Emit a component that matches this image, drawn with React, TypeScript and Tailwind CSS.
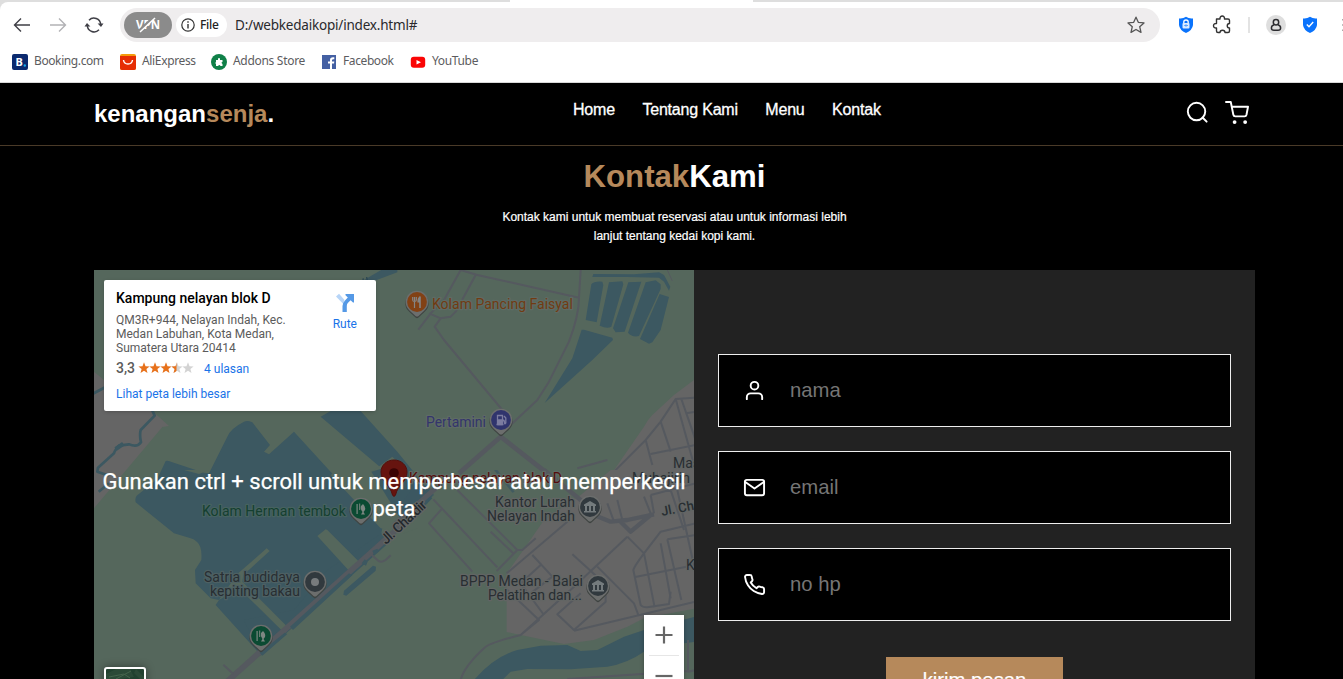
import React from "react";

const GREEN = "#55675c";
const GRAY = "#656565";
const WATER = "#3c5861";
const ROAD = "#55595f";

type PinProps = { x: number; y: number; color: string; kind: "food" | "fuel" | "fish" | "dot" | "civic" };

function Pin({ x, y, color, kind }: PinProps) {
  return (
    <g transform={`translate(${x} ${y})`}>
      <path d="M-11.6 1C-11.6-6-6.5-11.2 0-11.2S11.6-6 11.6 1C11.6 5.5 9 8 5 11.5L1.5 14.7Q0 16 -1.5 14.7L-5 11.5C-9 8-11.6 5.5-11.6 1Z" fill="#3f4442" transform="translate(0 .8)" />
      <path d="M-11.3 0C-11.3-6.5-6.3-11.3 0-11.3S11.3-6.5 11.3 0C11.3 4.5 9 7.3 5 10.8L1.5 14Q0 15.2 -1.5 14L-5 10.8C-9 7.3-11.3 4.5-11.3 0Z" fill="#6c6e6d" />
      <circle r="9.9" fill={color} />
      {kind === "food" && (
        <g stroke="#858585" strokeWidth="1.2" fill="none">
          <path d="M-4.3-5v3q0 1.5 1.8 1.5T-.7-2v-3M-2.5-5v11" />
          <path d="M3-5.5V6" strokeWidth="1.6" />
          <path d="M3-5Q1-4 1 0h2" fill="#858585" />
        </g>
      )}
      {kind === "fuel" && (
        <g fill="none" stroke="#7c7ca0" strokeWidth="1.3">
          <path d="M-3.5 4.5V-4.5H1.5V4.5M-4.5 4.5h7M1.5 0q2 0 2 2.5t1.3.5V-2L3-4" />
          <path d="M-3 0h4v4.5h-4Z" fill="#7c7ca0" />
        </g>
      )}
      {kind === "fish" && (
        <g fill="#7d8782">
          <path d="M-4.5-5h1.2V5h-1.2ZM-1.8-5.5h1V1h-1Z" />
          <path d="M2-5Q5-2 4 1L2.5 3 4 5.5H0L1.5 3Q-1 0 0-3Z" />
        </g>
      )}
      {kind === "dot" && <circle r="4" fill="#777b7d" />}
      {kind === "civic" && (
        <g fill="#747b7d">
          <path d="M-6-2.5 0-6 6-2.5V-1H-6ZM-6 4H6V5.500H-6ZM-5-1h2v5h-2ZM-1-1h2v5h-2ZM3-1h2v5H3Z" />
        </g>
      )}
    </g>
  );
}

const halo = { paintOrder: "stroke" } as React.CSSProperties;

function MapDrawing() {
  return (
    <svg className="absolute inset-0 block h-[409px] w-[600px]" viewBox="94 270 600 409" fontFamily="Roboto, sans-serif">
      <rect x="94" y="270" width="600" height="409" fill={GREEN} />

      {/* north-west quarter */}
      <g transform="translate(94 265) scale(.333333)">
        <path d="M0 320 30 345 175 438 225 483 205 486 0 730Z" fill={GRAY} />
        <g fill="none" stroke={WATER} strokeWidth="8" strokeLinejoin="round">
          <path d="M-5 387 35 366M172 430 182 452 140 495Q136 510 141 532 130 548 105 538L75 542Q62 556 60 565L12 608 10 620 45 632M14 680 45 655" />
          <path d="M65 552 88 536" strokeWidth="13" />
        </g>
        <path d="M810 45 870 10H910V22L840 48Z" fill={WATER} />
        <path d="M806 50 808 40M820 48 818 36" stroke="#2c4854" strokeWidth="4" />
        <path d="M215 588Q222 585 235 592L330 623 345 625 400 515Q410 490 450 470 460 465 475 472L528 540 510 560 525 568 600 500 865 790 860 815 500 1170 365 1020 375 1005 350 1000 305 955 303 915 322 885Q325 845 310 832 300 822 290 820L240 805 125 712Q122 700 128 692L190 642Z" fill={WATER} />
        <path d="M680 455 710 438H800L910 560 1015 690 1000 715 925 770 835 650 875 620Z" fill={WATER} />
        <path d="M831 622 895 575 912 592 845 650Z" fill={GREEN} />
        <path d="M725 618H830L970 790 930 805 860 790 710 630Z" fill={GREEN} />
        <path d="M832 620 900 600 1015 700 980 735 925 770Z" fill={WATER} />
      </g>

      {/* south-west quarter */}
      <g transform="translate(94 470) scale(.333333)">
        <path d="M500 557 900 205 870 185 700 300 600 420 450 450Z" fill={WATER} />
        <path d="M670 198 695 178 700 180 795 275 765 302ZM430 312 518 235 527 243 448 315 445 335 580 470 572 490 430 350 400 375 375 390Z" fill={GREEN} />
        <path d="M270 0h75l-30 12Z" fill={GREEN} />
        <path d="M400 634 960 132" stroke={ROAD} strokeWidth="17" />
        <path d="M750 362 837 287 846 290 845 302 757 377 748 374ZM588 470 765 310 775 316 597 480ZM497 548 572 488 580 492 505 557ZM835 242 850 236 855 244 840 255ZM803 280 812 268 821 275 816 287Z" fill={WATER} />
        <path d="M388 584 418 612M828 250 850 270Q860 280 875 270L890 256" fill="none" stroke={ROAD} strokeWidth="6" />
      </g>

      {/* north-east quarter */}
      <g transform="translate(394 265) scale(.333333)">
        <path d="M900 345 840 390 775 450Q760 465 750 485L650 630 640 645H900Z" fill={GRAY} />
        <g fill={WATER}>
          <path d="M598 27 595 36H700L795 38 810 50 825 77 829 65 810 30 795 22 720 28Z" />
          <path d="M592 58Q600 48 625 50L628 60 608 172 575 165ZM645 52 685 49 688 58 652 185Q640 192 617 182ZM703 52 742 50 692 200 665 202 657 190ZM755 52 785 46 800 58V72L735 213Q715 218 702 203ZM797 87 825 96 800 195 775 232 765 236 738 222Z" />
          <path d="M563 194 570 194 655 218 657 225 595 285 452 414 535 280Z" />
        </g>
        <g fill="none" stroke={ROAD} strokeWidth="6" strokeLinejoin="round">
          <path d="M200 15 150 105 110 145 73 194M105 145 140 160 170 155 185 140 245 30M200 15 250 30 555 98M560 15 555 98Q555 150 525 230L465 350 430 405 350 480M140 160 122 185 150 225 325 435" />
          <path d="M820 15 835 48" strokeWidth="3" />
          <path d="M905 398 845 402 800 470 755 525 640 640M845 402 900 600M862 402 910 540M875 445 905 440M800 470 830 560M755 525 775 600M770 567 905 540" />
        </g>
        <path d="M195 625 320 515 460 625" fill="none" stroke={ROAD} strokeWidth="14" />
      </g>

      {/* south-east quarter */}
      <g transform="translate(394 470) scale(.333333)">
        <path d="M650 0 560 75 450 150 395 230 338 310V486L380 495 510 522 600 510 700 470 750 445 905 415V0Z" fill={GRAY} />
        <path d="M240 630Q300 560 370 540L440 527 520 525 560 543 610 540 690 500 750 480 905 440V515L870 520 750 545Q700 580 640 590L530 598 400 597 350 605 325 630Z" fill={WATER} />
        <path d="M300 0 310 0 362 65 355 68ZM60 50 100 45 120 75 85 108 0 130Z" fill={WATER} opacity=".8" />
        <g fill="none" stroke={ROAD} strokeWidth="6" strokeLinejoin="round">
          <path d="M118 88 310 292M145 115 105 160 235 305M190 60 370 240 308 303M290 185 360 252M370 240 385 240 425 205M338 310 520 155M415 255 475 320M440 285 380 340 450 435M475 320 410 370M340 360 435 450 380 495Q280 520 270 535 210 590 200 630M380 495 540 350 700 200M535 253 620 330M610 290 720 400 733 435M635 350V395L540 480 490 433 560 370M540 482 905 395M700 200 750 250 800 185 905 160M750 250Q720 290 718 300L740 405Q745 412 760 412L825 402 830 365M720 322 905 285M750 250 782 412M800 220 830 385M820 208 905 195M820 208 862 390M640 100 660 155M670 90 685 150M750 80 770 130M635 645 640 640M770 75 905 40M770 75 780 130M850 60 905 310M882 510V605L905 600M520 627 880 603M550 -5 640 -30M830 60 870 180" />
          <path d="M450 0 560 90 600 135 650 155 700 150 780 133M680 155 710 185 770 135" strokeWidth="13" />
        </g>
        <path d="M0 165 155 28" stroke={ROAD} strokeWidth="15" />
      </g>

      <g fontSize="14" strokeWidth="2.5" strokeLinejoin="round" letterSpacing=".1">
        <g stroke="#5e6b64">
          <text x="432" y="309" fill="#713b12" textLength="141" style={halo}>Kolam Pancing Faisyal</text>
          <text x="426" y="427" fill="#33356c" textLength="60" style={halo}>Pertamini</text>
          <text x="202" y="516" fill="#143f30" stroke="#46625f" textLength="144" style={halo}>Kolam Herman tembok</text>
          <text x="409" y="483" fill="#560b0b" textLength="153" style={halo}>Kampung nelayan blok D</text>
        </g>
        <g fill="#282e32" stroke="#626564">
          <text x="204" y="582" textLength="96" stroke="#4d6063" style={halo}>Satria budidaya</text>
          <text x="210" y="596" textLength="90" stroke="#4d6063" style={halo}>kepiting bakau</text>
          <text x="495" y="507" textLength="80" style={halo}>Kantor Lurah</text>
          <text x="487" y="521" textLength="88" style={halo}>Nelayan Indah</text>
          <text x="460" y="586" textLength="123" style={halo}>BPPP Medan - Balai</text>
          <text x="488" y="600" textLength="94" style={halo}>Pelatihan dan...</text>
          <text x="673" y="468" style={halo}>Mas</text>
          <text x="632" y="483" textLength="58" style={halo}>Muhajirin</text>
          <text x="686" y="570" style={halo}>K</text>
          <text transform="translate(662 516) rotate(-11)" fontSize="13" fontWeight="500" letterSpacing="0" style={halo}>Jl. Cha</text>
          <text transform="translate(386 545) rotate(-43)" fontWeight="500" textLength="57" fill="#23282c" style={halo}>Jl. Chaidir</text>
        </g>
      </g>

      <Pin x={417} y={302} color="#824115" kind="food" />
      <Pin x={501} y={420} color="#30346d" kind="fuel" />
      <Pin x={361} y={509} color="#0b4a32" kind="fish" />
      <Pin x={261} y={636} color="#0b4a32" kind="fish" />
      <Pin x={315} y={582} color="#31393e" kind="dot" />
      <Pin x={590} y={507} color="#31393e" kind="civic" />
      <Pin x={598} y={586} color="#31393e" kind="civic" />

      <path d="M381 472C381 465 387 460 394 460S407 465 407 472C407 482 398 484 395.5 495Q394 498 392.500 495C390 484 381 482 381 472Z" fill="#66140f" stroke="#540f0c" />
      <circle cx="394" cy="473" r="4.800" fill="#3a0404" />
    </svg>
  );
}

function Stars() {
  const star = "M6 .3 7.500 4.200 11.600 4.400 8.400 7 9.500 11 6 8.700 2.500 11 3.600 7 .4 4.400 4.500 4.200Z";
  return (
    <svg className="mb-[2px] h-[12px] w-[56px]" viewBox="0 0 56 12">
      <defs>
        <clipPath id="half"><rect x="0" y="0" width="5.500" height="12" /></clipPath>
      </defs>
      {[0, 1, 2, 3, 4].map((i) => (
        <path key={i} d={star} transform={`translate(${i * 11} 0)`} fill={i < 3 ? "#e7711b" : "#d3d3d3"} />
      ))}
      <g transform="translate(33 0)"><path d={star} fill="#e7711b" clipPath="url(#half)" /></g>
    </svg>
  );
}

function MapPanel() {
  return (
    <div className="relative h-[409px] w-[600px] shrink-0 overflow-hidden font-[Roboto,sans-serif]">
      <MapDrawing />
      <div className="absolute top-[198px] left-0 w-full text-center text-[22px] leading-[27px] text-white [-webkit-text-stroke:.25px_white]">
        <div className="whitespace-nowrap">Gunakan ctrl + scroll untuk memperbesar atau memperkecil</div>
        <div>peta</div>
      </div>
      <div className="absolute top-[10px] left-[10px] flex h-[131px] w-[272px] justify-between rounded-[2px] bg-white pt-[9px] pr-[19px] pl-[12px] shadow-[0_1px_4px_-1px_rgba(0,0,0,.3)]">
        <div className="whitespace-nowrap">
          <div className="text-[14px] leading-[18px] font-medium text-black">Kampung nelayan blok D</div>
          <div className="mt-[6px] text-[12px] leading-[14px] text-[#5b5b5b]">
            <div>QM3R+944, Nelayan Indah, Kec.</div>
            <div>Medan Labuhan, Kota Medan,</div>
            <div>Sumatera Utara 20414</div>
          </div>
          <div className="mt-[6px] flex h-[15px] items-center">
            <span className="mr-[3px] text-[14px] font-medium text-[#5b5b5b]">3,3</span>
            <Stars />
            <span className="ml-[10px] text-[12px] text-[#1a73e8]">4 ulasan</span>
          </div>
          <div className="mt-[11px] text-[12px] leading-[15px] text-[#1a73e8]">Lihat peta lebih besar</div>
        </div>
        <div className="flex flex-col items-center pt-[4px] text-[12px] text-[#1a73e8]">
          <svg className="h-[20px] w-[20px]" viewBox="0 0 20 20">
            <path d="M1 3.500 4 .8 9.500 7 8.300 11Z" fill="#b7d5f8" />
            <path d="M7.500 19V13Q7.500 10 10 7.500L12.800 4.500 10.500 2.200V1H19V9.500H18L15.600 7.200 12.800 10Q11.800 11 11.800 13V19Z" fill="#5599e6" />
          </svg>
          <span className="mt-[3px] leading-[16px]">Rute</span>
        </div>
      </div>
      <div className="absolute top-[345px] left-[550px] flex h-[80px] w-[40px] flex-col items-center bg-white shadow-[0_1px_4px_rgba(0,0,0,.3)]">
        <svg className="h-[40px] w-[40px]" viewBox="0 0 40 40"><path d="M11.500 20H28.500M20 11.500V28.500" stroke="#666" strokeWidth="2.200" /></svg>
        <div className="h-px w-[30px] bg-[#e6e6e6]" />
        <svg className="h-[39px] w-[40px]" viewBox="0 0 40 39"><path d="M11.500 20H28.500" stroke="#666" strokeWidth="2.200" /></svg>
      </div>
      <div className="absolute top-[397px] left-[10px] h-[42px] w-[42px] rounded-[3px] border-2 border-white bg-[#21412f] shadow-[0_0_8px_rgba(0,0,0,.4)]">
        <svg className="h-full w-full" viewBox="0 0 38 38">
          <path d="M0 5 10 0H24L28 8 14 10 0 12ZM30 0 38 8V14L28 4Z" fill="#2b4a37" />
          <path d="M3 8 18 5 24 9M10 10 25 2" stroke="#45644c" fill="none" />
        </svg>
      </div>
    </div>
  );
}

function Bookmark({ icon, label, width, text }: { icon: React.ReactNode; label: string; width: string; text: string }) {
  return (
    <div className={"flex h-[28px] items-center gap-[6px] " + width}>
      <span className="flex h-4 w-4 shrink-0 items-center justify-center">{icon}</span>
      <span className={"mb-[2px] text-[12px] whitespace-nowrap " + text}>{label}</span>
    </div>
  );
}

function BrowserChrome() {
  return (
    <div className="h-[83px] shrink-0 border-b border-[#d8d8d8] bg-[#dedede] font-['Noto_Sans',sans-serif]">
      <div className="flex h-[2px]">
        <div className="ml-[10px] h-[2px] w-[500px] rounded-t-sm bg-[#dedede]" />
        <div className="h-[2px] w-[243px] bg-white" />
      </div>
      <div className="h-[80px] rounded-tl-[8px] bg-white pt-[6px]">
        <div className="flex h-[34px] items-center">
          <svg className="ml-[12px] h-[20px] w-[20px] shrink-0" viewBox="0 0 20 20" fill="none" stroke="#3f3f46" strokeWidth="1.400"><path d="M18 10H2.500M9 3.500 2.500 10 9 16.500" /></svg>
          <svg className="ml-[16px] h-[20px] w-[20px] shrink-0" viewBox="0 0 20 20" fill="none" stroke="#b2b2b5" strokeWidth="1.400"><path d="M2 10H17.500M11 3.500 17.500 10 11 16.500" /></svg>
          <svg className="ml-[16px] h-[20px] w-[20px] shrink-0" viewBox="0 0 20 20" fill="none" stroke="#3f3f46" strokeWidth="1.500">
            <path d="M5 5.200A6.800 6.800 0 0 1 16.700 9.500M15 14.800A6.800 6.800 0 0 1 3.300 10.500" />
            <path d="M13.600 8.500H19.500L17 12ZM.5 11.500H6.400L3 8Z" fill="#3f3f46" stroke="none" />
          </svg>
          <div className="ml-[16px] flex h-[34px] w-[1040px] shrink-0 items-center rounded-full bg-[#efedee] pl-[4px]">
            <div className="relative flex h-[26px] w-[48px] items-center justify-center rounded-full bg-[#8b8b8b] text-[11.500px] font-bold text-white">
              VPN
              <svg className="absolute inset-0 h-[26px] w-[48px]" viewBox="0 0 48 26"><path d="M15 19 30 5" stroke="#8b8b8b" strokeWidth="3" /><path d="M16 20 31 6" stroke="#fff" strokeWidth="1.500" /></svg>
            </div>
            <div className="ml-[4px] flex h-[24px] w-[51px] items-center rounded-full bg-white pl-[5px]">
              <svg className="h-[14px] w-[14px]" viewBox="0 0 14 14"><circle cx="7" cy="7" r="6.200" fill="none" stroke="#333" strokeWidth="1.200" /><path d="M7 6v4.500M7 3.300v1.400" stroke="#333" strokeWidth="1.400" /></svg>
              <span className="ml-[5px] text-[12px] font-medium tracking-[-.3px] text-[#222]">File</span>
            </div>
            <span className="ml-[8px] text-[13.500px] tracking-[-.2px] whitespace-nowrap text-[#29292c]">D:/webkedaikopi/index.html#</span>
            <svg className="mr-[14px] ml-auto h-[20px] w-[20px]" viewBox="0 0 20 20" fill="none" stroke="#555" strokeWidth="1.300" strokeLinejoin="round"><path d="M10 2.200 12.300 7.300 18 7.900 13.700 11.700 15 17.400 10 14.500 5 17.400 6.300 11.700 2 7.900 7.700 7.300Z" /></svg>
          </div>
          <svg className="ml-[18px] h-[18px] w-[16px] shrink-0" viewBox="0 0 16 18">
            <path d="M1 2.500Q5 3 8 .8 11 3 15 2.500V9Q14.500 14 8 17 1.500 14 1 9Z" fill="#0a73fc" />
            <path d="M5.800 8V6Q5.800 4 8 4T10.200 6V8" stroke="#fff" strokeWidth="1.300" fill="none" /><rect x="4.500" y="7" width="7" height="5.500" rx="1" fill="#dcecff" /><path d="M8 8.500v2M6.500 9.500h.8M8.800 9.500h.8" stroke="#0a73fc" />
          </svg>
          <svg className="ml-[18px] h-[20px] w-[20px] shrink-0" viewBox="0 0 20 20" fill="none" stroke="#333" strokeWidth="1.400" strokeLinejoin="round"><path d="M4.500 4H8C7.500 0 13 0 12.500 4H16Q17.500 4 17.500 5.500V8.500C14.500 8.500 14.500 13 17.500 13V16Q17.500 17.500 16 17.500H13C13 14.500 8 14.500 8 17.500H6Q4.500 17.500 4.500 16V13C.5 13.500.5 8 4.500 8.500Z" /></svg>
          <div className="ml-[16px] h-[16px] w-[2px] shrink-0 bg-[#e3e3e3]" />
          <div className="ml-[16px] flex h-[20px] w-[20px] shrink-0 items-center justify-center rounded-full bg-[#dedede]">
            <svg className="h-[14px] w-[14px]" viewBox="0 0 14 14" fill="none" stroke="#2c2c30" strokeWidth="1.500"><circle cx="7" cy="4.200" r="2.700" /><path d="M5 6.800C1.500 8 1.500 12.300 5 12.300H9C12.500 12.300 12.500 8 9 6.800" /></svg>
          </div>
          <svg className="ml-[16px] h-[18px] w-[16px] shrink-0" viewBox="0 0 16 18">
            <path d="M1 2.500Q5 3 8 .8 11 3 15 2.500V9Q14.500 14 8 17 1.500 14 1 9Z" fill="#0a73fc" /><path d="M4.800 8.500 7 10.800 11.200 6" stroke="#fff" strokeWidth="1.400" fill="none" />
          </svg>
          <svg className="ml-[24px] h-[14px] w-[2px] shrink-0" viewBox="0 0 2 14"><path d="M0 1h2v1.500H0ZM0 6.300h2v1.500H0ZM0 11.500h2V13H0Z" fill="#aaa" /></svg>
        </div>
        <div className="mt-[6px] flex h-[28px] items-center pl-[12px] text-[#5c5c60]">
          <Bookmark width="w-[108px]" text="tracking-[-.4px]" label="Booking.com" icon={<svg viewBox="0 0 16 16"><rect width="16" height="16" rx="2" fill="#0b2a6f" /><text x="3.500" y="12.300" fontSize="11" fontWeight="700" fill="#fff">B</text><circle cx="12.800" cy="11.500" r="1.200" fill="#18a6e8" /></svg>} />
          <Bookmark width="w-[91px]" text="tracking-[-.35px]" label="AliExpress" icon={<svg viewBox="0 0 16 16"><rect width="16" height="16" rx="2" fill="#f59b0b" /><path d="M0 2H16V14Q16 16 14 16H2Q0 16 0 14Z" fill="#e62e04" /><path d="M3.500 6Q4 10 8 10T12.500 6" stroke="#fff" strokeWidth="1.400" fill="none" /></svg>} />
          <Bookmark width="w-[110px]" text="tracking-[-.3px]" label="Addons Store" icon={<svg viewBox="0 0 16 16"><circle cx="8" cy="8" r="8" fill="#0f8048" /><path d="M5 6H7Q6.500 4 8 4T9 6H11.500V8Q9.500 8.500 11.500 10V12H9.500Q8.500 10 7 12H5V10Q3.500 9 5 8Z" fill="#fff" /></svg>} />
          <Bookmark width="w-[89px]" text="tracking-[-.4px]" label="Facebook" icon={<svg viewBox="0 0 16 16"><rect x="1" y="1" width="14" height="14" fill="#4460a3" /><path d="M9 15V9.500H7V7.500H9V6Q9 3.300 12 3.300H13.300V5.300H12.200Q11 5.300 11 6.300V7.500H13.300L13 9.500H11V15Z" fill="#fff" /></svg>} />
          <Bookmark width="w-[90px]" text="tracking-[-.35px]" label="YouTube" icon={<svg viewBox="0 0 16 16"><rect x=".8" y="2.800" width="14.400" height="11" rx="3" fill="#fa0505" /><path d="M6.500 6 11 8.300 6.500 10.600Z" fill="#fff" /></svg>} />
        </div>
      </div>
    </div>
  );
}

function Field({ label, children }: { label: string; children: React.ReactNode }) {
  return (
    <div className="flex h-[73px] shrink-0 items-center border border-[#eee] bg-black pl-[24px]">
      <svg className="h-[23px] w-[23px]" viewBox="0 0 24 24" fill="none" stroke="#fff" strokeWidth="2" strokeLinecap="round" strokeLinejoin="round">{children}</svg>
      <span className="ml-[24px] text-[20.300px] text-[#757575]">{label}</span>
    </div>
  );
}

export default function App() {
  return (
    <div className="flex h-[679px] w-[1343px] flex-col overflow-hidden bg-black font-['Liberation_Sans',Arial,sans-serif] text-white">
      <BrowserChrome />
      <header className="flex h-[63px] shrink-0 items-center border-b border-[#4a3a28] pr-[94px] pl-[94px]">
        <div className="w-[479px] text-[24px] font-bold">kenangan<span className="text-[#b6895b]">senja</span>.</div>
        <nav className="mb-[8px] flex gap-[27.500px] text-[16px] tracking-[-.2px] [-webkit-text-stroke:.3px_white]">
          <span>Home</span><span>Tentang Kami</span><span>Menu</span><span>Kontak</span>
        </nav>
        <div className="mb-[4px] ml-auto flex items-center gap-[17px]">
          <svg className="h-[22px] w-[22px]" viewBox="0 0 24 24" fill="none" stroke="#fff" strokeWidth="2.100" strokeLinecap="round"><circle cx="11.500" cy="11.500" r="9.500" /><path d="m22.500 22.500-4.500-4.500" /></svg>
          <svg className="h-[23px] w-[24px]" viewBox="0 0 25 24" fill="none" stroke="#fff" strokeWidth="2" strokeLinecap="round" strokeLinejoin="round"><path d="M1 1H6L8.700 14.400Q9 16 10.700 16H20.500Q22 16 22.400 14.400L24 6H7" /><circle cx="10" cy="22" r="1" /><circle cx="21" cy="22" r="1" /></svg>
        </div>
      </header>
      <section className="flex flex-col items-center">
        <h2 className="mt-[11px] mr-[-6px] text-[31.200px] leading-[40px] font-bold"><span className="text-[#b6895b]">Kontak</span>Kami</h2>
        <p className="mt-[11px] mr-[-6px] text-center text-[12px] leading-[19px] [-webkit-text-stroke:.2px_white]">Kontak kami untuk membuat reservasi atau untuk informasi lebih<br />lanjut tentang kedai kopi kami.</p>
        <div className="mt-[24px] mr-[-6px] flex h-[409px] w-[1161px] bg-[#222]">
          <MapPanel />
          <form className="flex flex-1 flex-col gap-[24px] px-[24px] pt-[84px]">
            <Field label="nama"><path d="M20 21v-2a4 4 0 0 0-4-4H8a4 4 0 0 0-4 4v2" /><circle cx="12" cy="7" r="4" /></Field>
            <Field label="email"><path d="M4 4h16c1.100 0 2 .9 2 2v12c0 1.100-.9 2-2 2H4c-1.100 0-2-.9-2-2V6c0-1.100.9-2 2-2z" /><path d="m22 6-10 7L2 6" /></Field>
            <Field label="no hp"><path d="M22 16.920v3a2 2 0 0 1-2.180 2 19.790 19.790 0 0 1-8.630-3.070 19.500 19.500 0 0 1-6-6 19.790 19.790 0 0 1-3.070-8.670A2 2 0 0 1 4.110 2h3a2 2 0 0 1 2 1.720 12.840 12.840 0 0 0 .7 2.810 2 2 0 0 1-.45 2.110L8.090 9.910a16 16 0 0 0 6 6l1.270-1.270a2 2 0 0 1 2.110-.45 12.840 12.840 0 0 0 2.810.7A2 2 0 0 1 22 16.920z" /></Field>
            <button type="button" className="mt-[12px] h-[46px] w-[177px] shrink-0 self-center bg-[#b6895b] text-[20.300px] text-white [-webkit-text-stroke:.2px_white]">kirim pesan</button>
          </form>
        </div>
      </section>
    </div>
  );
}
